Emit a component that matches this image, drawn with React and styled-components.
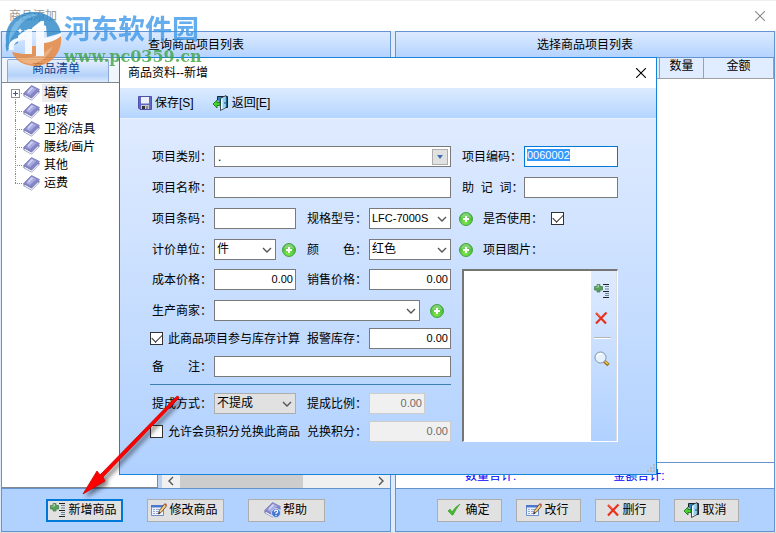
import { useId } from "react";
import styled, { createGlobalStyle, css } from "styled-components";

const colors = {
  line: "#6593cf",
  accent: "#1883d7",
  focus: "#0078d7",
  field: "#7a7a7a",
};

const tree = ["墙砖", "地砖", "卫浴/洁具", "腰线/画片", "其他", "运费"];

export default function App() {
  return (
    <>
      <GlobalStyle />
      <Page>
        <TitleBar>
          <span>商品添加</span>
          <CloseButton aria-label="关闭" $faded>
            <CloseIcon />
          </CloseButton>
        </TitleBar>
        <Panels>
          <Panel>
            <PanelHeader>查询商品项目列表</PanelHeader>
            <Browser>
              <Side>
                <Tabs>
                  <Tab>商品清单</Tab>
                </Tabs>
                <Tree>
                  {tree.map((name, i) => (
                    <TreeItem key={name}>
                      <Branch>{i === 0 && <Expander />}</Branch>
                      <BookIcon />
                      <TreeText $selected={i === 0}>{name}</TreeText>
                    </TreeItem>
                  ))}
                </Tree>
              </Side>
              <Results>
                <ScrollBar>
                  <Chevron $turn={90} />
                  <Thumb />
                  <Chevron $turn={-90} />
                </ScrollBar>
              </Results>
            </Browser>
            <Footer $start={44} $gap={24}>
              <Button $wide $focused>
                <ListAddIcon />
                新增商品
              </Button>
              <Button $wide>
                <EditIcon />
                修改商品
              </Button>
              <Button $wide>
                <BookIcon help />
                帮助
              </Button>
            </Footer>
          </Panel>
          <Panel>
            <PanelHeader>选择商品项目列表</PanelHeader>
            <TableArea>
              <Table>
                <thead>
                  <tr>
                    <Th />
                    <Th $width={44}>数量</Th>
                    <Th $width={70}>金额</Th>
                  </tr>
                </thead>
              </Table>
            </TableArea>
            <Totals>
              <span>数量合计:</span>
              <span>金额合计:</span>
            </Totals>
            <Footer $start={41} $gap={14}>
              <Button $spaced>
                <CheckIcon />
                确定
              </Button>
              <Button>
                <EditIcon />
                改行
              </Button>
              <Button>
                <DeleteIcon />
                删行
              </Button>
              <Button>
                <DoorIcon />
                取消
              </Button>
            </Footer>
          </Panel>
        </Panels>
        <ProductDialog />
        <Watermark />
        <Pointer />
      </Page>
    </>
  );
}

function ProductDialog() {
  return (
    <Dialog role="dialog" aria-label="商品资料--新增">
      <DialogTitle>
        <span>商品资料--新增</span>
        <CloseButton aria-label="关闭">
          <CloseIcon />
        </CloseButton>
      </DialogTitle>
      <Toolbar>
        <ToolButton>
          <SaveIcon />
          保存[S]
        </ToolButton>
        <ToolButton>
          <DoorIcon />
          返回[E]
        </ToolButton>
      </Toolbar>
      <Form>
        <Stack $gap={10}>
          <Row>
            <Label htmlFor="category">项目类别：</Label>
            <Combo>
              <input id="category" defaultValue="." />
              <button type="button" aria-label="选择类别">
                <svg width="6" height="4" viewBox="0 0 6 4">
                  <path d="M0 0h6L3 4z" fill="#3c6eb4" />
                </svg>
              </button>
            </Combo>
            <Label htmlFor="code" $inset>
              项目编码：
            </Label>
            <Highlighted>
              <input id="code" defaultValue="0060002" size={7} />
            </Highlighted>
          </Row>
          <Row>
            <Label htmlFor="name">项目名称：</Label>
            <Input id="name" $span={3} />
            <Label htmlFor="memo" $inset>
              助{"  "}记{"  "}词：
            </Label>
            <Input id="memo" />
          </Row>
          <Row>
            <Label htmlFor="barcode">项目条码：</Label>
            <Input id="barcode" />
            <Label htmlFor="model" $inset>
              规格型号：
            </Label>
            <Select id="model" value="LFC-7000S" />
            <Extra>
              <AddButton />
              <Label htmlFor="enabled">是否使用：</Label>
              <Checkbox id="enabled" defaultChecked />
            </Extra>
          </Row>
          <Row>
            <Label htmlFor="unit">计价单位：</Label>
            <Pair>
              <Select id="unit" value="件" />
              <AddButton />
            </Pair>
            <Label htmlFor="color" $inset>
              颜　　色：
            </Label>
            <Select id="color" value="红色" />
            <Extra>
              <AddButton />
              <Label as="span">项目图片：</Label>
            </Extra>
          </Row>
        </Stack>
        <Lower>
          <Stack $gap={7}>
            <Stack $gap={10}>
              <Row $half>
                <Label htmlFor="cost">成本价格：</Label>
                <Input id="cost" defaultValue="0.00" $number />
                <Label htmlFor="price" $inset>
                  销售价格：
                </Label>
                <Input id="price" defaultValue="0.00" $number />
              </Row>
              <Row $half>
                <Label htmlFor="maker">生产商家：</Label>
                <Maker>
                  <Select id="maker" value="" />
                  <AddButton />
                </Maker>
              </Row>
            </Stack>
            <Row $half>
              <CheckLabel>
                <Checkbox defaultChecked />
                此商品项目参与库存计算
              </CheckLabel>
              <Label htmlFor="alarm" $inset>
                报警库存：
              </Label>
              <Input id="alarm" defaultValue="0.00" $number />
            </Row>
            <Row $half>
              <Label htmlFor="remark">备　　注：</Label>
              <Input id="remark" $span={3} />
            </Row>
            <Divider />
            <Row $half>
              <Label htmlFor="mode">提成方式：</Label>
              <Select id="mode" value="不提成" $grey />
              <Label htmlFor="rate" $inset>
                提成比例：
              </Label>
              <Input id="rate" defaultValue="0.00" $number $short disabled />
            </Row>
            <Row $half>
              <CheckLabel>
                <Checkbox />
                允许会员积分兑换此商品
              </CheckLabel>
              <Label htmlFor="points" $inset>
                兑换积分：
              </Label>
              <Input id="points" defaultValue="0.00" $number disabled />
            </Row>
          </Stack>
          <PictureBox>
            <PictureTools>
              <IconButton type="button" aria-label="添加图片">
                <ListAddIcon />
              </IconButton>
              <IconButton type="button" aria-label="删除图片">
                <DeleteIcon />
              </IconButton>
              <ToolDivider />
              <IconButton type="button" aria-label="查看图片">
                <SearchIcon />
              </IconButton>
            </PictureTools>
          </PictureBox>
        </Lower>
      </Form>
      <Grip width="9" height="9" viewBox="0 0 9 9" fill="#b8b8b8">
        <path d="M7 0h2v2H7zM4 3h2v2H4zM7 3h2v2H7zM1 6h2v2H1zM4 6h2v2H4zM7 6h2v2H7z" />
      </Grip>
    </Dialog>
  );
}

function Select({ id, value, $grey }) {
  return (
    <SelectBox $grey={$grey}>
      <select id={id} defaultValue={value}>
        <option value={value}>{value}</option>
      </select>
      <Chevron />
    </SelectBox>
  );
}

function Chevron({ $turn = 0 }) {
  return (
    <ChevronSvg width="10" height="10" viewBox="0 0 10 10" $turn={$turn}>
      <path d="M1 3l4 4 4-4" fill="none" stroke="#555" strokeWidth="1.4" />
    </ChevronSvg>
  );
}

function AddButton() {
  const id = useId();
  return (
    <IconButton type="button" aria-label="添加">
      <svg width="14" height="14" viewBox="0 0 14 14">
        <defs>
          <radialGradient id={id} cx="45%" cy="75%" r="70%">
            <stop offset="0" stopColor="#7eea4c" />
            <stop offset="1" stopColor="#3fae35" />
          </radialGradient>
        </defs>
        <circle cx="7" cy="7" r="6.5" fill={`url(#${id})`} stroke="#45a545" />
        <path d="M2 6a5 5 0 0 1 10 0q-5-2-10 0" fill="#a6e59a" opacity=".6" />
        <path d="M6 4h2v2h2v2H8v2H6V8H4V6h2z" fill="#fff" />
      </svg>
    </IconButton>
  );
}

function CloseIcon() {
  return (
    <svg width="10" height="10" viewBox="0 0 10 10">
      <path d="M0 0l10 10M10 0L0 10" stroke="currentColor" strokeWidth="1.1" />
    </svg>
  );
}

function BookIcon({ help }) {
  return (
    <svg width="17" height="16" viewBox="0 0 17 16">
      <path d="M.5 8.500v2.500l8 4.500 8-8V5.500z" fill="#6d6fa9" />
      <path d="M1.500 9.500l7 4 7-7v1.500l-7 7-7-4z" fill="#f4f4fc" />
      <path d="M.5 8.500l8-8 8 4-8 8z" fill="#8486ca" stroke="#8083bb" strokeWidth=".8" />
      <path d="M3 8l6-6 4.500 2-6.500 6z" fill="#a9abe0" />
      <path d="M4.500 6.500l4-4.500 2 1-5 5z" fill="#cfd1f2" />
      {help && (
        <g fill="none" stroke="#fff">
          <circle cx="12" cy="11" r="4.5" fill="#4679cf" stroke="#c5d8f8" />
          <path d="M10.5 9.7q0-1.5 1.6-1.5t1.5 1.4q0 1-1.5 1.5v.8M12 13v1" strokeWidth="1.2" />
        </g>
      )}
    </svg>
  );
}

function ListAddIcon() {
  return (
    <svg width="16" height="16" viewBox="0 0 16 16">
      <path d="M3 1.500h3v2h2.500v3.500H6v2H3V7H.5V3.500H3z" fill="#57a05c" stroke="#4a8354" strokeWidth=".8" />
      <path d="M3.500 2h1.500v2.500H1.500V4h2z" fill="#a8d8a4" />
      <path d="M9 1.500h6M9 8.500h6M9 14.500h6" stroke="#222" />
      <path d="M11 3.500h4M11 6h4M11 10.500h4M11 12.500h4" stroke="#668294" />
    </svg>
  );
}

function EditIcon() {
  return (
    <svg width="16" height="16" viewBox="0 0 16 16">
      <path d="M.5 3.500h12v10H.5z" fill="#edf4ff" stroke="#6f8fcb" />
      <path d="M0 3h13v2.500H0z" fill="#4b78cf" />
      <path d="M2 7.500h2M5 7.500h4M2 9.500h2M5 9.500h3M2 11.500h2M5 11.500h4" stroke="#93a9d4" />
      <path d="M7.500 12l1-3.500 5-6.500 2 2-5 6z" fill="#f3cf86" stroke="#6f4c29" strokeWidth=".9" />
      <path d="M13 2.500l1-1.500 2 1.500-1 1.500z" fill="#c65548" />
      <path d="M7.500 12l.5-2 1.500 1z" fill="#222" />
    </svg>
  );
}

function DeleteIcon() {
  return (
    <svg width="14" height="14" viewBox="0 0 14 14">
      <path d="M2 2l10 10.500M12.500 1.500L2 12.500" stroke="#e8311c" strokeWidth="2.2" />
      <path d="M2.500 2l4 4" stroke="#ff7a5c" />
    </svg>
  );
}

function CheckIcon() {
  return (
    <svg width="14" height="14" viewBox="0 0 14 14">
      <path d="M1 8l2-2 2 3q3-5 8-8-4 5-7 11H5z" fill="#46b82d" stroke="#2f9b25" strokeWidth=".6" />
    </svg>
  );
}

function DoorIcon() {
  return (
    <svg width="16" height="16" viewBox="0 0 16 16">
      <path d="M4.500 5V1.500h10v11H10" fill="#2e87bb" stroke="#17242e" />
      <path d="M7.500 3.500l5.500-3v12l-5.500 3z" fill="#f0faff" stroke="#17242e" strokeWidth=".8" />
      <path d="M9.500 3l3-1.500v10.500l-3 2z" fill="#8fd2f3" />
      <path d="M11 8h2" stroke="#155072" />
      <path d="M0 9l4-4v2.500h3v3H4V13z" fill="#42d52e" stroke="#17681a" strokeWidth=".8" />
    </svg>
  );
}

function SaveIcon() {
  return (
    <svg width="14" height="14" viewBox="0 0 14 14">
      <path d="M.5.500h13v13H2l-1.500-1.500z" fill="#6468c4" stroke="#4e51a6" />
      <path d="M3 1h8v6.500H3z" fill="#eaf0fc" />
      <path d="M3 9h8v4H3z" fill="#c6c9cf" />
      <path d="M4 10h3v3H4z" fill="#333" />
      <path d="M8 10h2v3H8z" fill="#8a8c92" />
    </svg>
  );
}

function SearchIcon() {
  return (
    <svg width="16" height="16" viewBox="0 0 16 16">
      <path d="M10 10l4.500 4" stroke="#9b7015" strokeWidth="3.4" />
      <path d="M11 10.500l3 2.500" stroke="#f1c555" strokeWidth="1.6" />
      <circle cx="6.500" cy="6.500" r="5.500" fill="#e5f1fc" stroke="#8393a7" />
      <path d="M3 6q1-4 5-3" fill="none" stroke="#fff" strokeWidth="1.5" />
    </svg>
  );
}

function Watermark() {
  return (
    <Brand>
      <svg width="57" height="56" viewBox="0 0 57 56">
        <path d="M1 31C-1 13 12 1 28 1c15 0 26 9 28 21l-14 4-1-11-7-3-7 6v4l-7-3-7 6v7q-9 4-11 9-2-4-1-10z" fill="#2a86c8" />
        <path d="M10 12Q20 1 34 4 18 6 12 19 6 25 4 33 3 21 10 12" fill="#5cabe0" />
        <path d="M56 25c2 16-10 30-26 30C20 55 10 50 7 41l11 2h8v-8h5v10h8V32q11-3 17-7" fill="#eb8434" />
        <path d="M11 46q20 4 37-11-7 16-22 18-9-1-15-7" fill="#f5a662" />
        <path d="M13 25l10-7h4v25h-7V25l-7 4zM27 17l9-7h3v35h-8V17l-4 3z" fill="#fff" />
        <path d="M15 17l1 2 2 .5-2 1-1 2-1-2-2-1 2-.5z" fill="#fff" />
        <path d="M4 39c-2-8 5-13 16-13v3c-8 0-13 4-11 10zM39 27q10-1 17-5v3q-7 6-17 7z" fill="#fff" />
      </svg>
      <BrandText>
        <strong>河东软件园</strong>
        <em>www.pc0359.cn</em>
      </BrandText>
    </Brand>
  );
}

function Pointer() {
  return (
    <PointerSvg width="106" height="106" viewBox="0 0 106 106">
      <path d="M96 6l2-1 1 2-76 79 2 4L3 103l14-23 3 4z" fill="red" stroke="#d00000" strokeWidth=".8" />
    </PointerSvg>
  );
}

const GlobalStyle = createGlobalStyle`
  * {
    box-sizing: border-box;
  }
  body {
    margin: 0;
    font: 12px/16px "Liberation Sans", "Noto Sans CJK SC", sans-serif;
    color: #000;
  }
  button, input, select {
    font: inherit;
    color: inherit;
  }
  svg {
    display: block;
    flex: none;
  }
`;
const Page = styled.div`
  position: relative;
  min-height: 100vh;
  display: flex;
  flex-direction: column;
  background: #fff;
  border-top: 1px solid #eee;
  border-bottom: 1px solid #ddd;
`;
const TitleBar = styled.header`
  height: 30px;
  padding: 0 11px 0 9px;
  display: flex;
  align-items: center;
  justify-content: space-between;
  color: #999;
`;
const CloseButton = styled.button`
  padding: 0;
  border: 0;
  background: none;
  color: ${(props) => (props.$faded ? "#888" : "#000")};
`;
const Panels = styled.main`
  flex: 1;
  display: grid;
  grid-template-columns: 390fr 380fr;
  gap: 4px;
  padding: 0 1px;
  background: #dfebfb;
`;
const Panel = styled.section`
  display: flex;
  flex-direction: column;
  border: 1px solid ${colors.line};
  min-width: 0;
`;
const PanelHeader = styled.h2`
  height: 26px;
  margin: 0;
  display: flex;
  align-items: center;
  justify-content: center;
  font-size: 12px;
  font-weight: 400;
  background: linear-gradient(#dceaff, #b3d3ff);
  border-bottom: 1px solid ${colors.line};
`;
const Browser = styled.div`
  flex: 1;
  display: flex;
  gap: 4px;
  background: #bcd3f2;
`;
const Side = styled.div`
  width: 156px;
  display: flex;
  flex-direction: column;
`;
const Tabs = styled.div`
  height: 24px;
  padding: 1px 5px 0;
  background: #f1f6fd;
`;
const Tab = styled.button`
  width: 102px;
  height: 23px;
  padding: 0 4px 4px 0;
  color: #15428b;
  border: 1px solid #8aa9d5;
  border-bottom: 0;
  border-radius: 2px 2px 0 0;
  background: linear-gradient(#e3eefc, #b5d2fa 70%, #dce9fb);
`;
const Tree = styled.ul`
  flex: 1;
  margin: 0;
  padding: 1px 0 0 8px;
  list-style: none;
  background: #fff;
  border: 1px solid #828790;
  border-left: 0;
`;
const Branch = styled.span`
  position: relative;
  width: 12px;
  height: 18px;
  margin-right: 1px;
  &::before {
    content: "";
    position: absolute;
    left: 5px;
    top: 0;
    height: 100%;
    border-left: 1px dotted #888;
  }
  &::after {
    content: "";
    position: absolute;
    left: 5px;
    right: 0;
    top: 9px;
    border-top: 1px dotted #888;
  }
`;
const TreeItem = styled.li`
  display: flex;
  align-items: center;
  height: 18px;
  &:first-child ${Branch}::before {
    top: 9px;
    height: 9px;
  }
  &:last-child ${Branch}::before {
    height: 9px;
  }
`;
const Expander = styled.i`
  position: absolute;
  z-index: 1;
  left: 1px;
  top: 5px;
  width: 9px;
  height: 9px;
  border: 1px solid #919191;
  background: linear-gradient(#36589c, #36589c) center / 5px 1px no-repeat,
    linear-gradient(#36589c, #36589c) center / 1px 5px no-repeat, #fff;
`;
const TreeText = styled.span`
  margin-left: 2px;
  padding: 1px 2px;
  background: ${(props) => (props.$selected ? "#ececec" : "none")};
`;
const Results = styled.div`
  flex: 1;
  display: flex;
  align-items: flex-end;
  background: #fff;
`;
const ScrollBar = styled.div`
  flex: 1;
  height: 15px;
  padding: 0 4px;
  display: flex;
  align-items: center;
  justify-content: space-between;
  background: #f0f0f0;
`;
const Thumb = styled.div`
  width: 56%;
  height: 100%;
  margin: 0 auto 0 4px;
  background: #cdcdcd;
`;
const Footer = styled.footer`
  height: 43px;
  display: flex;
  align-items: center;
  gap: ${(props) => props.$gap}px;
  padding-left: ${(props) => props.$start}px;
  border-top: 1px solid ${colors.line};
  background: #b1d1ff;
`;
const Button = styled.button`
  width: ${(props) => (props.$wide ? 77 : 65)}px;
  height: 23px;
  padding: 0 2px 0 0;
  display: flex;
  align-items: center;
  justify-content: center;
  gap: ${(props) => (props.$spaced ? 4 : 2)}px;
  white-space: nowrap;
  background: #e1e1e1;
  border: 1px solid #adadad;
  ${(props) =>
    props.$focused &&
    css`
      border: 2px solid ${colors.focus};
    `}
`;
const TableArea = styled.div`
  flex: 1;
  background: #fff;
`;
const Table = styled.table`
  width: 100%;
  table-layout: fixed;
  border-collapse: collapse;
`;
const Th = styled.th`
  width: ${(props) => (props.$width ? props.$width + "px" : "auto")};
  height: 20px;
  padding: 0 0 3px;
  font-weight: 400;
  background: #e0ecff;
  border: 1px solid #a0a0a0;
  border-top: 0;
`;
const Totals = styled.div`
  height: 26px;
  display: flex;
  align-items: center;
  gap: 97px;
  padding-left: 69px;
  color: #00f;
  background: #fff;
  border-top: 1px solid ${colors.line};
`;
const Dialog = styled.div`
  position: absolute;
  left: 119px;
  top: 56px;
  width: 538px;
  border: 1px solid ${colors.accent};
  background: linear-gradient(#dfebff 60px, #b0d1ff);
`;
const DialogTitle = styled.header`
  height: 30px;
  padding: 0 10px 0 8px;
  display: flex;
  align-items: center;
  justify-content: space-between;
  background: #fff;
`;
const Toolbar = styled.div`
  height: 31px;
  padding-left: 18px;
  display: flex;
  align-items: center;
  gap: 19px;
  background: linear-gradient(#dcebff, #b5d5ff);
  border-bottom: 1px solid #e6f0ff;
`;
const ToolButton = styled.button`
  display: flex;
  align-items: center;
  gap: 3px;
  padding: 0;
  border: 0;
  background: none;
`;
const Form = styled.form`
  padding: 27px 38px 32px 30px;
`;
const Stack = styled.div`
  display: flex;
  flex-direction: column;
  gap: ${(props) => props.$gap}px;
`;
const Row = styled.div`
  display: grid;
  grid-template-columns: ${(props) =>
    props.$half ? "64px 82px 73px 82px" : "64px 82px 73px 82px 73px 94px"};
  align-items: center;
  height: 21px;
`;
const Lower = styled.div`
  display: grid;
  grid-template-columns: 301px 1fr;
  gap: 11px;
  margin-top: 9px;
`;
const Label = styled.label`
  padding-left: ${(props) => (props.$inset ? 11 : 2)}px;
  white-space: pre;
`;
const fieldBox = css`
  height: 21px;
  background: #fff;
  border: 1px solid ${colors.field};
`;
const Input = styled.input`
  ${fieldBox}
  min-width: 0;
  width: ${(props) => (props.$short ? "56px" : "100%")};
  padding: 0 2px 2px;
  font-size: 11px;
  outline: 0;
  grid-column: span ${(props) => props.$span || 1};
  text-align: ${(props) => (props.$number ? "right" : "left")};
  &:disabled {
    color: #6d6d6d;
    background: #f0f0f0;
    border-color: #ccc;
  }
`;
const Highlighted = styled.div`
  ${fieldBox}
  border-color: ${colors.focus};
  padding: 2px;
  input {
    display: block;
    width: 43px;
    height: 12px;
    padding: 0;
    border: 0;
    outline: 0;
    font-size: 11px;
    color: #fff;
    background: #3399ff;
  }
`;
const Combo = styled.div`
  ${fieldBox}
  grid-column: span 3;
  display: flex;
  align-items: center;
  padding: 0 2px;
  input {
    flex: 1;
    min-width: 0;
    padding: 0 1px;
    border: 0;
    outline: 0;
  }
  button {
    width: 16px;
    height: 16px;
    padding: 0;
    display: flex;
    align-items: center;
    justify-content: center;
    border: 1px solid #adadad;
    background: #e1e1e1;
  }
`;
const SelectBox = styled.div`
  ${fieldBox}
  position: relative;
  flex: 1;
  background: ${(props) => (props.$grey ? "#e1e1e1" : "#fff")};
  border-color: ${(props) => (props.$grey ? "#adadad" : colors.field)};
  select {
    display: block;
    width: 100%;
    height: 100%;
    padding: 0 0 2px 2px;
    appearance: none;
    border: 0;
    outline: 0;
    background: none;
  }
  select:has([value="LFC-7000S"]) {
    font-size: 11px;
  }
  svg {
    position: absolute;
    right: 3px;
    top: 5px;
    pointer-events: none;
  }
`;
const ChevronSvg = styled.svg`
  transform: rotate(${(props) => props.$turn}deg);
`;
const Pair = styled.div`
  display: flex;
  align-items: center;
  gap: 6px;
`;
const Maker = styled.div`
  grid-column: span 3;
  display: flex;
  align-items: center;
  gap: 10px;
  padding-right: 7px;
`;
const Extra = styled.div`
  grid-column: span 2;
  display: flex;
  align-items: center;
  gap: 8px;
  padding-left: 8px;
`;
const IconButton = styled.button`
  padding: 0;
  border: 0;
  background: none;
`;
const Checkbox = styled.input.attrs({ type: "checkbox" })`
  appearance: none;
  flex: none;
  width: 13px;
  height: 13px;
  margin: 0;
  border: 1px solid #333;
  background: #fff;
  &:checked::after {
    content: "";
    display: block;
    width: 9px;
    height: 5px;
    margin: 1px;
    border: solid #333;
    border-width: 0 0 1px 1px;
    transform: rotate(-45deg);
  }
`;
const CheckLabel = styled.label`
  grid-column: span 2;
  display: flex;
  align-items: center;
  gap: 5px;
  white-space: nowrap;
`;
const Divider = styled.hr`
  width: 100%;
  height: 2px;
  margin: 0;
  border: 0;
  border-top: 1px solid #3c7fb1;
`;
const PictureBox = styled.div`
  display: flex;
  justify-content: flex-end;
  background: #fff;
  border: 1px solid #fff;
  border-top: 2px solid #757575;
  border-left: 2px solid #757575;
`;
const PictureTools = styled.div`
  width: 26px;
  padding: 12px 0 0 3px;
  display: flex;
  flex-direction: column;
  align-items: flex-start;
  gap: 12px;
  background: linear-gradient(#deebff, #b0d1ff);
  border-right: 1px solid #ddd;
`;
const ToolDivider = styled.hr`
  width: 17px;
  height: 2px;
  margin: 0;
  border: 0;
  border-top: 1px solid #b5b5b5;
  background: #fff;
`;
const Grip = styled.svg`
  position: absolute;
  right: 1px;
  bottom: 1px;
`;
const Brand = styled.div`
  position: absolute;
  left: 5px;
  top: 10px;
  display: flex;
  gap: 2px;
  opacity: 0.8;
  pointer-events: none;
`;
const BrandText = styled.div`
  display: flex;
  flex-direction: column;
  padding-top: 2px;
  strong {
    font-size: 27px;
    line-height: 34px;
    color: #3f99e8;
  }
  em {
    font: bold 16px/20px "DejaVu Serif", serif;
    color: #3fa43f;
  }
`;
const PointerSvg = styled.svg`
  position: absolute;
  left: 80px;
  top: 390px;
  pointer-events: none;
  filter: drop-shadow(3px 3px 2px rgba(0, 0, 0, 0.5));
`;
